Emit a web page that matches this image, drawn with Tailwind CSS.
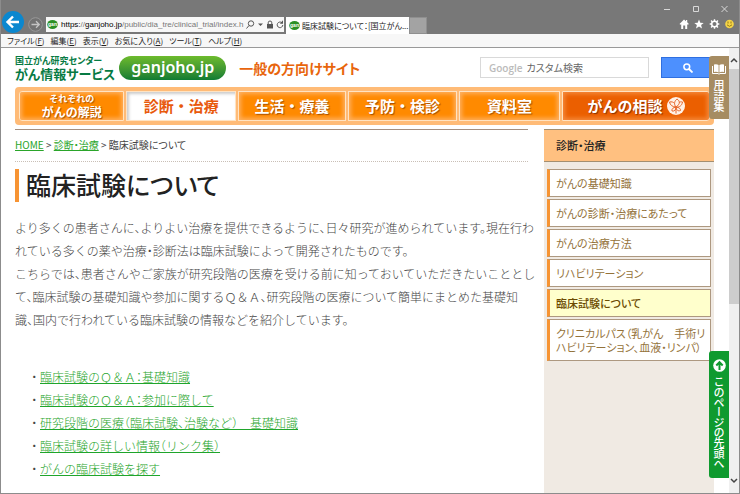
<!DOCTYPE html>
<html lang="ja">
<head>
    <meta charset="UTF-8">
    <meta name="viewport" content="width=device-width, initial-scale=1.0">
    <title>臨床試験について：[国立がん研究センター がん情報サービス]</title>
    <script src="https://cdn.jsdelivr.net/npm/@tailwindcss/browser@4"></script>
</head>
<body class="h-screen flex flex-col overflow-hidden bg-white border border-t-0 border-[#8c8c8c] text-[#444] font-['Noto_Sans_CJK_JP',sans-serif] [font-feature-settings:'palt']">

    <!-- Browser title bar -->
    <div class="h-[34px] shrink-0 bg-[#787878] flex justify-between">
        <div class="flex items-end">
            <button class="ml-px mb-px" aria-label="戻る">
                <svg class="size-[22px] block" viewBox="0 0 22 22">
                    <circle cx="11" cy="11" r="11" fill="#0a87cf"/>
                    <path d="M17 11H6M11 5.5L5.5 11l5.5 5.5" fill="none" stroke="#fff" stroke-width="2.4"/>
                </svg>
            </button>
            <button class="ml-1 mb-[2px]" aria-label="進む">
                <svg class="size-[15px] block" viewBox="0 0 15 15">
                    <circle cx="7.5" cy="7.5" r="6.8" fill="#727272" stroke="#999"/>
                    <path d="M3.5 7.5h7.5M8 4.2l3.3 3.3L8 10.8" fill="none" stroke="#c4c4c4" stroke-width="1.3"/>
                </svg>
            </button>
            <div class="ml-[3px] mb-[2px] h-[15px] w-[238px] bg-[#f7f7f7] flex items-center pl-px pr-[3px] gap-[3px]">
                <svg class="size-[11px] shrink-0" viewBox="0 0 11 11">
                    <ellipse cx="5.5" cy="5.5" rx="5.3" ry="4.5" fill="#2b8f24"/>
                    <text x="5.5" y="7.3" font-size="5" font-weight="bold" text-anchor="middle" fill="#fff" font-family="Liberation Sans">gan</text>
                </svg>
                <div class="flex-1 whitespace-nowrap text-[8px] leading-[14px] text-[#777] font-['Liberation_Sans',sans-serif]"><span class="text-black">https:</span>//<span class="text-black">ganjoho.jp</span>/public/dia_tre/clinical_trial/index.h</div>
                <svg class="h-[9px] w-[38px] shrink-0" viewBox="0 0 38 9" fill="none" stroke="#555">
                    <circle cx="5" cy="3.5" r="2.7"/>
                    <path d="M3 5.5L.5 8.5"/>
                    <path d="M12 3.5h5l-2.5 2.5z" fill="#555" stroke="none"/>
                    <path d="M22.2 4V2.8a1.8 1.8 0 0 1 3.6 0V4"/>
                    <path d="M21 4h6v4.5h-6z" fill="#555" stroke="none"/>
                    <path d="M35.800 2.700A2.800 2.800 0 1 0 36.800 5"/>
                    <path d="M37 .3v3.500h-3.200z" fill="#555" stroke="none"/>
                </svg>
            </div>
            <div class="ml-[2px] h-[17px] w-[123px] bg-white flex items-center gap-[2px] px-[3px]">
                <svg class="size-[11px] shrink-0" viewBox="0 0 11 11">
                    <ellipse cx="5.5" cy="5.5" rx="5.3" ry="4.5" fill="#2b8f24"/>
                    <text x="5.5" y="7.3" font-size="5" font-weight="bold" text-anchor="middle" fill="#fff" font-family="Liberation Sans">gan</text>
                </svg>
                <span class="flex-1 whitespace-nowrap text-[8px] leading-[14px] text-[#222]">臨床試験について：[国立がん...</span>
                <button aria-label="タブを閉じる">
                    <svg class="size-[6px] block" viewBox="0 0 6 6"><path d="M.5.5l5 5M5.5.5l-5 5" stroke="#888"/></svg>
                </button>
            </div>
            <button class="h-[17px] w-[18px] bg-[#a3a3a3] border border-[#8f8f8f]" aria-label="新しいタブ"></button>
        </div>
        <div class="flex flex-col items-end justify-between pt-[5px] pb-1">
            <svg class="h-2 w-[64px] mr-[11px]" viewBox="0 0 64 8" fill="none" stroke="#d8d8d8">
                <path d="M0 4.5h6M29.5 1.5h5v5h-5zM57.5 1l6 6M63.5 1l-6 6"/>
            </svg>
            <svg class="h-3 w-[56px] mr-[4px]" viewBox="0 0 56 12" fill="#fff">
                <path d="M5 1.5L.5 6l1 .8.7-.6V11h2V7.500h2V11h2V6.200l.7.6 1-.8L8.200 4.300V2H7v1.300z"/>
                <path d="M20 1.5l1.300 3.200 3.400.2-2.600 2.200.9 3.400-3-1.900-3 1.900.9-3.400-2.600-2.200 3.400-.2z"/>
                <circle cx="35.5" cy="6" r="2.800" fill="none" stroke="#fff" stroke-width="1.500"/>
                <path d="M35.5 1.200v2M35.500 8.800v2M30.700 6h2M38.300 6h2M32.100 2.600l1.300 1.300M37.600 8.100l1.300 1.300M38.900 2.600l-1.300 1.300M33.400 8.100l-1.300 1.300" stroke="#fff" stroke-width="1.400"/>
                <circle cx="50.5" cy="6" r="4.300" fill="#f5d547"/>
                <path d="M49 3.500v2M52 3.500v2M48 6.800q2.500 3 5 0" fill="none" stroke="#8a6d10" stroke-width=".9"/>
            </svg>
        </div>
    </div>

    <!-- Menu bar -->
    <div class="h-[14px] shrink-0 bg-[#f7f7f7] border-b border-[#999] flex items-center gap-[6px] pl-[6px] text-[8px] leading-[13px] text-[#222]">
        <button>ファイル(<u>F</u>)</button>
        <button>編集(<u>E</u>)</button>
        <button>表示(<u>V</u>)</button>
        <button>お気に入り(<u>A</u>)</button>
        <button>ツール(<u>T</u>)</button>
        <button>ヘルプ(<u>H</u>)</button>
    </div>

    <div class="flex-1 min-h-0 flex">
        <div class="relative flex-1 min-w-0 flex flex-col pl-[14px] pr-[15px]">

            <!-- Site header -->
            <header class="h-[39px] shrink-0 flex items-center">
                <a href="#" class="text-[#067a43] font-bold">
                    <span class="block text-[9px] leading-[12px]">国立がん研究センター</span>
                    <span class="block text-[13px] leading-[14px]">がん情報サービス</span>
                </a>
                <a href="#" class="ml-1 h-6 w-[107px] rounded-full bg-linear-to-b from-[#6dbb2c] to-[#0c7c32] text-white text-[16px] leading-[22px] font-semibold text-center font-['Noto_Sans',sans-serif]">ganjoho.jp</a>
                <span class="ml-[13px] text-[14px] leading-[18px] font-bold text-[#e8650c]">一般の方向けサイト</span>
                <form class="ml-auto flex items-center gap-3">
                    <label for="search" class="h-[21px] w-[169px] border border-[#d9d9d9] flex items-center gap-1 pl-2">
                        <span class="text-[10px] leading-[18px] font-semibold text-[#bbb] font-['Open_Sans',sans-serif]">Google</span>
                        <input type="text" id="search" placeholder="カスタム検索" class="w-[110px] text-[10px] leading-[18px] outline-none placeholder:text-[#666]">
                    </label>
                    <button type="submit" class="h-[21px] w-[53px] border border-[#2f6fe0] bg-[#4d90fe] flex items-center justify-center" aria-label="検索">
                        <svg class="size-[10px]" viewBox="0 0 10 10" fill="none" stroke="#fff"><circle cx="3.8" cy="3.8" r="2.900" stroke-width="1.500"/><path d="M6 6l3.500 3.500" stroke-width="1.800"/></svg>
                    </button>
                </form>
            </header>

            <!-- Global navigation -->
            <nav class="h-[38px] shrink-0 rounded-[4px] bg-[#ffbb77] flex gap-[2px] p-1 text-white text-[15px] leading-[18px] font-bold [font-feature-settings:normal]">
                <a href="#" class="flex-[105] flex flex-col items-center justify-center rounded-l-[3px] border border-[#ffe3c2] bg-[#ff8a00] inset-shadow-[0_0_4px_2px_#ffb060] text-shadow-[1px_1px_1px_#a85000]">
                    <span class="text-[9px] leading-[11px]">それぞれの</span>
                    <span class="text-[12px] leading-[15px]">がんの解説</span>
                </a>
                <a href="#" class="flex-[109] flex items-center justify-center border border-[#ffe3c2] bg-white inset-shadow-[2px_2px_3px_#ccc] text-[#e8590c]">診断・治療</a>
                <a href="#" class="flex-[108] flex items-center justify-center border border-[#ffe3c2] bg-[#ff8a00] inset-shadow-[0_0_4px_2px_#ffb060] text-shadow-[1px_1px_1px_#a85000]">生活・療養</a>
                <a href="#" class="flex-[108] flex items-center justify-center border border-[#ffe3c2] bg-[#ff8a00] inset-shadow-[0_0_4px_2px_#ffb060] text-shadow-[1px_1px_1px_#a85000]">予防・検診</a>
                <a href="#" class="flex-[101] flex items-center justify-center border border-[#ffe3c2] bg-[#ff8a00] inset-shadow-[0_0_4px_2px_#ffb060] text-shadow-[1px_1px_1px_#a85000]">資料室</a>
                <a href="#" class="flex-[148] flex items-center justify-center gap-1 rounded-r-[3px] border border-[#ffe3c2] bg-[#eb5f00] inset-shadow-[0_0_4px_2px_#f58a3c] text-shadow-[1px_1px_1px_#8a3000]">がんの相談
                    <svg class="size-[18px]" viewBox="0 0 18 18">
                        <circle cx="9" cy="9" r="9" fill="#fff1e6"/>
                        <path d="M9 10C5.500 10 3 8 2.500 5 4.500 4.500 6.500 5 7.500 6.500M9 10c-2.500-3-1.500-6 1-8 3 2 3.500 5-1 8zM9 10c3.500.5 6-1.500 6.500-5-1.500-.5-2.800 0-3.500.7M9 10c-3 .5-4.500 2-4 4 2.500.5 4-1 4-4zM9 10c3 .5 4.800 1.500 4.500 3.500-2.500 1-4.300-.5-4.500-3.500zM9 10v6.500" fill="none" stroke="#e8662a"/>
                    </svg>
                </a>
            </nav>

            <div class="flex-1 min-h-0 flex gap-4 pt-1">
                <main class="flex-1 min-w-0 border-t border-[#a48f80]">
                    <p class="h-8 border-b border-dotted border-[#c9bfb6] text-[10px] leading-[30px]">
                        <a href="#" class="text-[#2aa52a] underline">HOME</a> &gt; <a href="#" class="text-[#2aa52a] underline">診断・治療</a> &gt; 臨床試験について
                    </p>
                    <h1 class="mt-[7px] border-l-4 border-[#f79433] pl-[7px] pb-[2px] text-[25px] leading-[31px] font-medium text-[#222]">臨床試験について</h1>
                    <p class="mt-[14px] whitespace-nowrap text-[12px] leading-[23px] font-light [font-feature-settings:'halt']">
                        より多くの患者さんに、よりよい治療を提供できるように、日々研究が進められています。現在行わ<br>
                        れている多くの薬や治療・診断法は臨床試験によって開発されたものです。<br>
                        こちらでは、患者さんやご家族が研究段階の医療を受ける前に知っておいていただきたいこととし<br>
                        て、臨床試験の基礎知識や参加に関するＱ＆Ａ、研究段階の医療について簡単にまとめた基礎知<br>
                        識、国内で行われている臨床試験の情報などを紹介しています。
                    </p>
                    <ul class="mt-[34px] pl-[25px] list-['・_'] text-[12px] leading-[23px] font-light [font-feature-settings:'halt']">
                        <li><a href="#" class="text-[#1fa52b] underline">臨床試験のＱ＆Ａ：基礎知識</a></li>
                        <li><a href="#" class="text-[#1fa52b] underline">臨床試験のＱ＆Ａ：参加に際して</a></li>
                        <li><a href="#" class="text-[#1fa52b] underline">研究段階の医療（臨床試験、治験など）　基礎知識</a></li>
                        <li><a href="#" class="text-[#1fa52b] underline">臨床試験の詳しい情報（リンク集）</a></li>
                        <li><a href="#" class="text-[#1fa52b] underline">がんの臨床試験を探す</a></li>
                    </ul>
                </main>

                <!-- Side menu -->
                <aside class="w-[170px] shrink-0 bg-[#f0eae3]">
                    <h2 class="border-y border-[#a48f70] bg-[#ffc080] pl-3 text-[11px] leading-[31px] font-medium text-[#222]">診断・治療</h2>
                    <ul class="flex flex-col gap-[2px] px-[3px] pt-[7px] text-[11px] leading-[14px] text-[#94723a]">
                        <li><a href="#" class="block border border-[#ad9880] border-l-3 border-l-[#f79433] bg-white px-[6px] py-[6px]">がんの基礎知識</a></li>
                        <li><a href="#" class="block border border-[#ad9880] border-l-3 border-l-[#f79433] bg-white px-[6px] py-[6px]">がんの診断・治療にあたって</a></li>
                        <li><a href="#" class="block border border-[#ad9880] border-l-3 border-l-[#f79433] bg-white px-[6px] py-[6px]">がんの治療方法</a></li>
                        <li><a href="#" class="block border border-[#ad9880] border-l-3 border-l-[#f79433] bg-white px-[6px] py-[6px]">リハビリテーション</a></li>
                        <li><a href="#" class="block border border-[#ad9880] border-l-3 border-l-[#f79433] bg-[#ffffcc] px-[6px] py-[6px] font-medium text-[#6b4a00]">臨床試験について</a></li>
                        <li><a href="#" class="block whitespace-nowrap border border-[#ad9880] border-l-3 border-l-[#f79433] bg-white px-[6px] py-[6px]">クリニカルパス（乳がん　手術リ<br>ハビリテーション、血液・リンパ）</a></li>
                    </ul>
                </aside>
            </div>

            <!-- Fixed side tabs -->
            <a href="#" class="absolute right-0 top-2 w-5 h-[63px] rounded-l-[3px] bg-[#a68c62] flex flex-col items-center pt-2 gap-1 text-white">
                <svg class="h-[11px] w-[14px]" viewBox="0 0 14 11" fill="#fff">
                    <path d="M2 .5Q5 0 6.600 1v7.500Q5 7.500 2 8zM12 .5Q9 0 7.400 1v7.500Q9 7.500 12 8z"/>
                    <path d="M.5 2v7.500H6l1 .7 1-.7h5.500V2" fill="none" stroke="#fff"/>
                </svg>
                <span class="[writing-mode:vertical-rl] [font-feature-settings:normal] text-[11px] leading-[14px] font-medium">用語集</span>
            </a>
            <a href="#" class="absolute right-0 bottom-[15px] w-5 h-[127px] rounded-l-[3px] bg-[#0f9a2f] flex flex-col items-center pt-2 gap-[5px] text-white">
                <svg class="size-[13px] shrink-0" viewBox="0 0 13 13">
                    <circle cx="6.5" cy="6.5" r="6.300" fill="#fff"/>
                    <path d="M6.5 11V4M3.300 6.500L6.500 3.200l3.200 3.300" fill="none" stroke="#0f9a2f" stroke-width="2"/>
                </svg>
                <span class="[writing-mode:vertical-rl] [font-feature-settings:'vpal'] whitespace-nowrap text-[11px] leading-[14px] font-medium">このページの先頭へ</span>
            </a>
        </div>

        <!-- Scrollbar -->
        <div class="w-[10px] shrink-0 bg-[#f0f0f0] flex flex-col items-center justify-between pt-[9px] pb-[9px]">
            <svg class="h-[6px] w-2 shrink-0" viewBox="0 0 8 6"><path d="M1 5l3-3 3 3" fill="none" stroke="#444" stroke-width="1.500"/></svg>
            <div class="mt-[6px] mb-auto h-[55%] w-full bg-[#cdcdcd]"></div>
            <svg class="h-[6px] w-2 shrink-0" viewBox="0 0 8 6"><path d="M1 1l3 3 3-3" fill="none" stroke="#444" stroke-width="1.500"/></svg>
        </div>
    </div>
</body>
</html>
